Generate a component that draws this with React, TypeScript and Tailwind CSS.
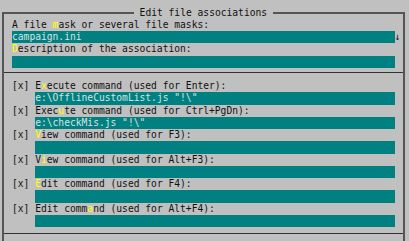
function Hot({ text, at }: { text: string; at: number }) {
  return (
    <>
      {text.slice(0, at)}
      <span className="text-[#ffff00]">{text[at]}</span>
      {text.slice(at + 1)}
    </>
  );
}

function Label({ text, at }: { text: string; at: number }) {
  return (
    <div className="h-[12.25px]">
      <Hot text={text} at={at} />
    </div>
  );
}

function Field({ value = '', wide, arrow }: { value?: string; wide?: boolean; arrow?: boolean }) {
  return (
    <div className="flex h-[12.25px]">
      <div
        className={
          wide
            ? 'w-[382.8px] bg-[#008080] text-[#d8e0e0]'
            : 'ml-[23.2px] w-[359.6px] bg-[#008080] text-[#d8e0e0]'
        }
      >
        {value}
      </div>
      {arrow && <div>↓</div>}
    </div>
  );
}

function Separator({ offset }: { offset: string }) {
  return (
    <div className={'h-[12.25px] -ml-[8px] ' + offset}>
      <div className="h-px bg-[#333]" />
    </div>
  );
}

export default function App() {
  return (
    <div className="w-[409px] h-[241px] overflow-hidden bg-[#c0c0c0] text-[#111] font-['DejaVu_Sans_Mono',monospace] text-[9.63px] leading-[12.25px] whitespace-pre">
      <div className="relative ml-[2px] mt-[12px] w-[402.5px] h-[240px] border-x-2 border-t-2 border-[#555] pl-[8px] pt-[4.75px]">
        <div className="absolute top-[-7.5px] left-[129.8px] h-[12.25px] bg-[#c0c0c0]"> Edit file associations </div>

        <Label text="A file mask or several file masks:" at={7} />
        <Field value="campaign.ini" wide arrow />
        <Label text="Description of the association:" at={0} />
        <Field wide />

        <Separator offset="pt-[4.25px]" />

        <Label text="[x] Execute command (used for Enter):" at={5} />
        <Field value={'e:\\OfflineCustomList.js "!\\"'} />
        <Label text="[x] Execute command (used for Ctrl+PgDn):" at={8} />
        <Field value={'e:\\checkMis.js "!\\"'} />
        <Label text="[x] View command (used for F3):" at={4} />
        <Field />
        <Label text="[x] View command (used for Alt+F3):" at={5} />
        <Field />
        <Label text="[x] Edit command (used for F4):" at={4} />
        <Field />
        <Label text="[x] Edit command (used for Alt+F4):" at={13} />
        <Field />

        <Separator offset="pt-[5.5px]" />
      </div>
    </div>
  );
}
